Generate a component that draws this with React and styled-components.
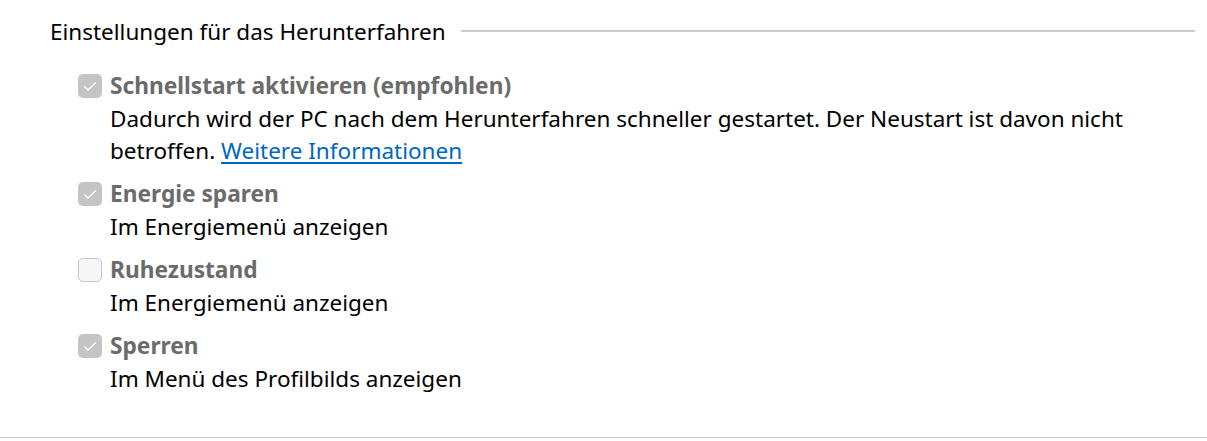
import React from "react"
import styled, { createGlobalStyle } from "styled-components"

const Global = createGlobalStyle`
  body {
    margin: 0;
    background: #ffffff;
    font-family: "Noto Sans", "Open Sans", sans-serif;
    color: #000000;
  }
`

const Page = styled.div`
  height: 438px;
  box-sizing: border-box;
  border-bottom: 1px solid #c8c8c8;
  padding: 17px 12px 0 50px;
`

const Legend = styled.div`
  display: flex;
  align-items: center;
  font-size: 22.5px;
  line-height: 30px;
`

const Rule = styled.div`
  flex: 1;
  height: 2px;
  background: #cccccc;
  margin-left: 15px;
  margin-top: -3px;
`

const List = styled.div`
  display: flex;
  flex-direction: column;
  gap: 11px;
  padding: 23px 0 0 28px;
`

const Item = styled.div`
  display: grid;
  grid-template-columns: 25px 1fr;
  column-gap: 7px;
  align-items: start;
`

const Box = styled.span`
  box-sizing: border-box;
  width: 24px;
  height: 24px;
  margin-top: 4px;
  border-radius: 5px;
  display: flex;
  align-items: center;
  justify-content: center;
  background: ${({ checked }) => (checked ? "#c4c4c4" : "#f7f7f7")};
  border: ${({ checked }) => (checked ? "none" : "1.5px solid #c6c6c6")};
`

const Title = styled.div`
  font-size: 22.7px;
  font-weight: 700;
  color: #6b6b6b;
  line-height: 31px;
`

const Desc = styled.div`
  grid-column: 2;
  font-size: 22.5px;
  line-height: 32px;
  margin-top: 2px;
`

const Link = styled.a`
  color: #0067c0;
  text-decoration: underline;
  text-underline-offset: 3px;
`

const Check = () => (
  <svg width="14" height="11" viewBox="0 0 14 11">
    <path d="M1.5 5.6 L5 9 L12.5 1.8" fill="none" stroke="#ffffff" strokeWidth="1.3" strokeLinecap="round" strokeLinejoin="round" />
  </svg>
)

const items = [
  {
    title: "Schnellstart aktivieren (empfohlen)",
    checked: true,
    desc: (
      <>
        Dadurch wird der PC nach dem Herunterfahren schneller gestartet. Der Neustart ist davon nicht betroffen.{" "}
        <Link href="#">Weitere Informationen</Link>
      </>
    ),
  },
  { title: "Energie sparen", checked: true, desc: "Im Energiemenü anzeigen" },
  { title: "Ruhezustand", checked: false, desc: "Im Energiemenü anzeigen" },
  { title: "Sperren", checked: true, desc: "Im Menü des Profilbilds anzeigen" },
]

export default function App() {
  return (
    <Page>
      <Global />
      <Legend>
        Einstellungen für das Herunterfahren
        <Rule />
      </Legend>
      <List>
        {items.map((it) => (
          <Item key={it.title}>
            <Box checked={it.checked}>{it.checked && <Check />}</Box>
            <Title>{it.title}</Title>
            <Desc>{it.desc}</Desc>
          </Item>
        ))}
      </List>
    </Page>
  )
}
